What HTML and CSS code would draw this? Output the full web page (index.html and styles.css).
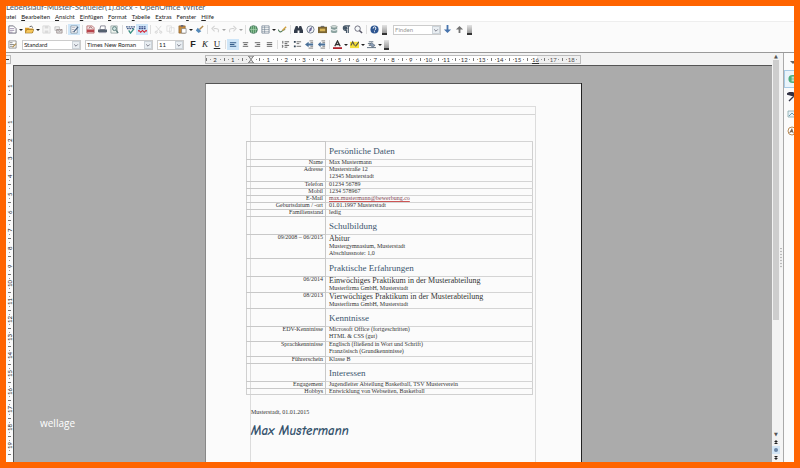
FILE: index.html
```
<!DOCTYPE html>
<html lang="de">
<head>
  <meta charset="utf-8">
  <title>Lebenslauf - OpenOffice Writer</title>
  <link rel="stylesheet" href="styles.css">
</head>
<body>
  <div class="window">
    <div class="titlebar"><span>Lebenslauf-Muster-Schueler(1).docx - OpenOffice Writer</span></div>

    <nav class="menubar">
      <a href="#" class="menu-first">Datei</a>
      <a href="#"><u>B</u>earbeiten</a>
      <a href="#"><u>A</u>nsicht</a>
      <a href="#"><u>E</u>infügen</a>
      <a href="#"><u>F</u>ormat</a>
      <a href="#"><u>T</u>abelle</a>
      <a href="#">E<u>x</u>tras</a>
      <a href="#">Fen<u>s</u>ter</a>
      <a href="#"><u>H</u>ilfe</a>
    </nav>

    <!-- Standard toolbar -->
    <div class="toolbar">
      <button class="tool" aria-label="Neu"><svg viewBox="0 0 10 10"><path d="M1 1h5l3 3v5H1z" fill="#fff" stroke="#667"/><path d="M2 4h5M2 6h5M2 8h3" stroke="#879" stroke-width=".8"/></svg></button>
      <span class="caret"></span>
      <button class="tool" aria-label="Öffnen"><svg viewBox="0 0 10 10"><path d="M0 3h4l1 1h4v5H0z" fill="#d99a28"/><path d="M2 5h8L8 9H0z" fill="#f6c65c" stroke="#8b6a24" stroke-width=".6"/><path d="M5 2q2-2 4 1" fill="none" stroke="#555"/></svg></button>
      <span class="caret"></span>
      <button class="tool dim" aria-label="Speichern"><svg viewBox="0 0 10 10"><path d="M1 1h7l1 1v7H1z" fill="#eee" stroke="#888" stroke-width=".7"/><path d="M3 1h4v3H3zM3 6h4v3H3z" fill="#aaa"/></svg></button>
      <button class="tool" aria-label="E-Mail"><svg viewBox="0 0 10 10"><path d="M1 2h5v4H1z" fill="#eee" stroke="#aaa" stroke-width=".7"/><path d="M3 5h6v4H3z" fill="#ddd" stroke="#877" stroke-width=".7"/><path d="M3 5l3 2 3-2" fill="none" stroke="#877" stroke-width=".7"/></svg></button>
      <span class="sep"></span>
      <button class="tool active" aria-label="Datei bearbeiten"><svg viewBox="0 0 10 10"><path d="M1 1h7v8H1z" fill="#fff" stroke="#789" stroke-width=".8"/><path d="M2 3h4M2 5h3M2 7h2" stroke="#889" stroke-width=".7"/><path d="M4 8l5-6" stroke="#466080" stroke-width="1.4"/></svg></button>
      <span class="sep"></span>
      <button class="tool" aria-label="PDF"><svg viewBox="0 0 10 10"><path d="M1 1h6l2 2v6H1z" fill="#f4e3e3" stroke="#a55" stroke-width=".8"/><path d="M1 5h8v3H1z" fill="#b8434b"/><path d="M3 4l2-2 2 2" fill="none" stroke="#855"/></svg></button>
      <button class="tool" aria-label="Drucken"><svg viewBox="0 0 10 10"><path d="M3 1h5v4H2z" fill="#fff" stroke="#667" stroke-width=".8"/><path d="M0 5h10v3H0z" fill="#566170"/><path d="M1 8h8v1H1z" fill="#99a"/></svg></button>
      <button class="tool" aria-label="Seitenansicht"><svg viewBox="0 0 10 10"><path d="M1 1h7v8H1z" fill="#eef4ee" stroke="#899" stroke-width=".8"/><circle cx="5" cy="4" r="2.2" fill="#cfe3e0" stroke="#577" /><path d="M7 6l2 3" stroke="#577" stroke-width="1.4"/></svg></button>
      <span class="sep"></span>
      <button class="tool" aria-label="Rechtschreibung"><svg viewBox="0 0 10 10"><path d="M0 2h10M1 4h8" stroke="#47608c" stroke-width="1.4" stroke-dasharray="2 .7"/><path d="M3 6l2 3 4-5" fill="none" stroke="#3b8f83" stroke-width="1.5"/></svg></button>
      <button class="tool active" aria-label="Automatische Prüfung"><svg viewBox="0 0 10 10"><path d="M1 2h8M1 4h8" stroke="#3b4c88" stroke-width="1.4" stroke-dasharray="2 .7"/><path d="M0 7l1-1 2 2 2-2 2 2 2-2 1 1" fill="none" stroke="#d52332" stroke-width="1.2"/></svg></button>
      <span class="sep"></span>
      <button class="tool dim" aria-label="Ausschneiden"><svg viewBox="0 0 10 10"><path d="M2 1l5 6M8 1L3 7" stroke="#999" stroke-width=".8"/><circle cx="2.5" cy="8" r="1.2" fill="none" stroke="#999"/><circle cx="7.5" cy="8" r="1.2" fill="none" stroke="#999"/></svg></button>
      <button class="tool dim" aria-label="Kopieren"><svg viewBox="0 0 10 10"><path d="M1 1h5v6H1zM4 3h5v6H4z" fill="#fff" stroke="#aaa" stroke-width=".8"/></svg></button>
      <button class="tool" aria-label="Einfügen"><svg viewBox="0 0 10 10"><path d="M1 1h7v8H1z" fill="#c58a3c" stroke="#865f2c" stroke-width=".7"/><path d="M3 0h3v2H3z" fill="#667"/><path d="M4 4h5v5H4z" fill="#fff" stroke="#777" stroke-width=".7"/></svg></button>
      <span class="caret"></span>
      <button class="tool" aria-label="Format übertragen"><svg viewBox="0 0 10 10"><path d="M9 1L5 5" stroke="#b38a4d" stroke-width="1.6"/><path d="M3 3l4 4-3 2-3-3z" fill="#5589b9"/></svg></button>
      <span class="sep"></span>
      <button class="tool dim" aria-label="Rückgängig"><svg viewBox="0 0 10 10"><path d="M8 8q2-5-5-4M4 1L1 4l3 3" fill="none" stroke="#999" stroke-width="1.2"/></svg></button>
      <span class="caret dim"></span>
      <button class="tool dim" aria-label="Wiederherstellen"><svg viewBox="0 0 10 10"><path d="M2 8q-2-5 5-4M6 1l3 3-3 3" fill="none" stroke="#999" stroke-width="1.2"/></svg></button>
      <span class="caret dim"></span>
      <span class="sep"></span>
      <button class="tool" aria-label="Hyperlink"><svg viewBox="0 0 10 10"><circle cx="5" cy="5" r="4.3" fill="#559764" stroke="#3d6b58" stroke-width=".8"/><path d="M1 5h8M5 1v8M3 1q-1 4 0 8M7 1q1 4 0 8" stroke="#b8dbc0" stroke-width=".6" fill="none"/></svg></button>
      <button class="tool" aria-label="Tabelle"><svg viewBox="0 0 10 10"><path d="M1 1h8v8H1z" fill="#fff" stroke="#678" stroke-width=".8"/><path d="M1 3h8M1 5h8M1 7h8M4 1v8" stroke="#678" stroke-width=".6"/></svg></button>
      <span class="caret"></span>
      <button class="tool" aria-label="Zeichnen"><svg viewBox="0 0 10 10"><path d="M0 5q2 4 4 2t4-2" fill="none" stroke="#4f7a5a" stroke-width="1.2"/><path d="M5 6l4-4" stroke="#d0a040" stroke-width="1.6"/></svg></button>
      <span class="sep"></span>
      <button class="tool" aria-label="Suchen"><svg viewBox="0 0 10 10"><path d="M2 1h2l1 3 1-3h2l2 5v3H6V6H4v3H0V6z" fill="#333c4a"/></svg></button>
      <button class="tool" aria-label="Navigator"><svg viewBox="0 0 10 10"><circle cx="5" cy="5" r="4" fill="#f3f6f9" stroke="#6c7886"/><path d="M7 2L6 6 3 8l1-4z" fill="#6d6a9a"/></svg></button>
      <button class="tool" aria-label="Gallery"><svg viewBox="0 0 10 10"><path d="M0 2h10v7H0z" fill="#7a6432"/><path d="M2 4h6v3H2z" fill="#d7b457"/><path d="M3 1h4v1H3z" fill="#555"/></svg></button>
      <button class="tool" aria-label="Datenquellen"><svg viewBox="0 0 10 10"><path d="M1 2v6q4 2 7 0V2z" fill="#8ea5a2"/><ellipse cx="4.5" cy="2" rx="3.5" ry="1.3" fill="#dde7e3" stroke="#677"  stroke-width=".6"/><path d="M1 5q4 2 7 0" fill="none" stroke="#fff"/></svg></button>
      <button class="tool" aria-label="Steuerzeichen"><svg viewBox="0 0 10 10"><path d="M9 1H4a2.5 2.5 0 000 5h1v3M7 1v8" fill="none" stroke="#456" stroke-width="1.3"/><circle cx="4" cy="3.5" r="2" fill="#456"/></svg></button>
      <button class="tool" aria-label="Maßstab"><svg viewBox="0 0 10 10"><circle cx="4" cy="4" r="3" fill="#f5f8fa" stroke="#667"/><path d="M6 6l3 3" stroke="#556" stroke-width="1.6"/></svg></button>
      <span class="sep"></span>
      <button class="tool" aria-label="Hilfe"><svg viewBox="0 0 10 10"><circle cx="5" cy="5" r="4.5" fill="#2d5590"/><path d="M3.5 4q0-2 1.5-2t1.5 1.5T5 6M5 7v1" fill="none" stroke="#fff" stroke-width="1.1"/></svg></button>
      <span class="handle"></span>
      <div class="combo find">
        <input type="text" placeholder="Finden" aria-label="Finden">
        <span class="drop"><svg viewBox="0 0 10 10"><path d="M2 4l3 3 3-3" fill="none" stroke="#556" stroke-width="1.2"/></svg></span>
      </div>
      <button class="tool" aria-label="Weitersuchen"><svg viewBox="0 0 10 10"><path d="M4 0h2v5h3L5 9 1 5h3z" fill="#4673ac"/></svg></button>
      <button class="tool" aria-label="Rückwärts suchen"><svg viewBox="0 0 10 10"><path d="M4 9h2V5h3L5 1 1 5h3z" fill="#737373"/></svg></button>
      <span class="handle"></span>
    </div>

    <!-- Formatting toolbar -->
    <div class="toolbar">
      <button class="tool styles" aria-label="Formatvorlagen"><svg viewBox="0 0 10 10"><path d="M1 1h8v8H1z" fill="#fff" stroke="#777" stroke-width=".8"/><path d="M2 3h3M2 5h5M2 7h3" stroke="#666" stroke-width=".8"/><path d="M5 8l4-4" stroke="#b09050" stroke-width="1.4"/></svg></button>
      <div class="combo style">
        <select aria-label="Vorlage"><option>Standard</option></select>
        <span class="drop"><svg viewBox="0 0 10 10"><path d="M2 4l3 3 3-3" fill="none" stroke="#556" stroke-width="1.2"/></svg></span>
      </div>
      <div class="combo font">
        <select aria-label="Schriftart"><option>Times New Roman</option></select>
        <span class="drop"><svg viewBox="0 0 10 10"><path d="M2 4l3 3 3-3" fill="none" stroke="#556" stroke-width="1.2"/></svg></span>
      </div>
      <div class="combo size">
        <select aria-label="Schriftgröße"><option>11</option></select>
        <span class="drop"><svg viewBox="0 0 10 10"><path d="M2 4l3 3 3-3" fill="none" stroke="#556" stroke-width="1.2"/></svg></span>
      </div>
      <button class="tool letter"><b>F</b></button>
      <button class="tool letter"><i>K</i></button>
      <button class="tool letter"><u>U</u></button>
      <span class="sep"></span>
      <button class="tool active" aria-label="Linksbündig"><svg viewBox="0 0 10 10"><path d="M1 3h7M1 5h5M1 7h7" stroke="#345c88" stroke-width="1.2"/></svg></button>
      <button class="tool" aria-label="Zentriert"><svg viewBox="0 0 10 10"><path d="M2 3h6M3 5h4M2 7h6" stroke="#666" stroke-width="1.1"/></svg></button>
      <button class="tool" aria-label="Rechtsbündig"><svg viewBox="0 0 10 10"><path d="M2 3h6M4 5h4M2 7h6" stroke="#666" stroke-width="1.1"/></svg></button>
      <button class="tool" aria-label="Blocksatz"><svg viewBox="0 0 10 10"><path d="M2 3h6M2 5h6M2 7h6" stroke="#666" stroke-width="1.1"/></svg></button>
      <span class="sep"></span>
      <button class="tool" aria-label="Nummerierung"><svg viewBox="0 0 10 10"><path d="M2 1v3M1 6h1v2H1M4 2h5M4 4h3M4 6h5M4 8h3" fill="none" stroke="#555"/></svg></button>
      <button class="tool" aria-label="Aufzählung"><svg viewBox="0 0 10 10"><path d="M1 2h2M1 7h2" stroke="#345" stroke-width="2"/><path d="M4 2h5M4 4h3M4 7h5" stroke="#666"/></svg></button>
      <button class="tool" aria-label="Einzug vermindern"><svg viewBox="0 0 10 10"><path d="M5 1h4M6 3h3M6 7h3M4 9h5" stroke="#777"/><path d="M0 5l4-3v2h5v2H4v2z" fill="#497099"/></svg></button>
      <button class="tool" aria-label="Einzug erhöhen"><svg viewBox="0 0 10 10"><path d="M5 1h4M6 3h3M6 7h3M4 9h5" stroke="#777"/><path d="M1 5l3-3v2h5v2H4v2z" fill="#497099"/></svg></button>
      <span class="sep"></span>
      <button class="tool" aria-label="Schriftfarbe"><svg viewBox="0 0 10 10"><path d="M2 7l3-6 3 6M3 5h4" fill="none" stroke="#333" stroke-width="1.4"/><path d="M0 8h10v2H0z" fill="#b0222c"/></svg></button>
      <span class="caret"></span>
      <button class="tool" aria-label="Hervorheben"><svg viewBox="0 0 10 10"><path d="M0 2h10v7H0z" fill="#f5df38"/><path d="M1 6l2-4 2 4M6 7l4-5" fill="none" stroke="#554" stroke-width="1.2"/></svg></button>
      <span class="caret"></span>
      <button class="tool" aria-label="Absatzhintergrund"><svg viewBox="0 0 10 10"><path d="M2 2h5M1 4h4M2 6h2" stroke="#567"/><path d="M5 3l4 3-3 2-3-3z" fill="#8a9cb4" stroke="#456" stroke-width=".6"/><path d="M0 8h10v1H0z" fill="#567"/></svg></button>
      <span class="caret"></span>
      <span class="handle"></span>
    </div>

    <div class="main">
      <div class="editor">
        <div class="ruler-row">
          <span class="tab-type"></span>
          <div class="ruler">
            <span>2</span><span>1</span><span class="indent"><svg viewBox="0 0 8 8"><path d="M1 0h6L4 4zM4 4l3 4H1z" fill="#ddd" stroke="#555" stroke-width=".8"/></svg></span><span>1</span><span>2</span><span>3</span><span>4</span><span>5</span><span>6</span><span>7</span><span>8</span><span>9</span><span>10</span><span>11</span><span>12</span><span>13</span><span>14</span><span>15</span><span class="edge">16</span><span class="margin">17</span><span class="margin">18</span>
          </div>
        </div>

        <div class="workspace">
          <div class="vruler">
            <span>1</span><span></span><span>1</span><span>2</span><span>3</span><span>4</span><span>5</span><span>6</span><span>7</span><span>8</span><span>9</span><span>10</span><span>11</span><span>12</span><span>13</span><span>14</span><span>15</span><span>16</span><span>17</span><span>18</span><span>19</span>
          </div>
          <div class="canvas">
            <div class="page">
              <div class="text-area">
                <div class="page-header"></div>
                <table class="cv">
                  <tr class="section"><td></td><th>Persönliche Daten</th></tr>
                  <tr><td>Name</td><td>Max Mustermann</td></tr>
                  <tr class="multi"><td>Adresse</td><td>Musterstraße 12<br>12345 Musterstadt</td></tr>
                  <tr><td>Telefon</td><td>01234 56789</td></tr>
                  <tr><td>Mobil</td><td>1234 578967</td></tr>
                  <tr><td>E-Mail</td><td><a href="mailto:max.mustermann@bewerbung.co">max.mustermann@bewerbung.co</a></td></tr>
                  <tr><td>Geburtsdatum / -ort</td><td>01.01.1997 Musterstadt</td></tr>
                  <tr><td>Familienstand</td><td>ledig</td></tr>
                  <tr class="section"><td></td><th>Schulbildung</th></tr>
                  <tr class="multi"><td>09/2008 – 06/2015</td><td><span class="lead">Abitur</span>Mustergymnasium, Musterstadt<br>Abschlussnote: 1,0</td></tr>
                  <tr class="section"><td></td><th>Praktische Erfahrungen</th></tr>
                  <tr><td>06/2014</td><td><span class="lead">Einwöchiges Praktikum in der Musterabteilung</span>Musterfirma GmbH, Musterstadt</td></tr>
                  <tr><td>08/2013</td><td><span class="lead">Vierwöchiges Praktikum in der Musterabteilung</span>Musterfirma GmbH, Musterstadt</td></tr>
                  <tr class="section"><td></td><th>Kenntnisse</th></tr>
                  <tr class="multi"><td>EDV-Kenntnisse</td><td>Microsoft Office (fortgeschritten)<br>HTML &amp; CSS (gut)</td></tr>
                  <tr class="multi"><td>Sprachkenntnisse</td><td>Englisch (fließend in Wort und Schrift)<br>Französisch (Grundkenntnisse)</td></tr>
                  <tr><td>Führerschein</td><td>Klasse B</td></tr>
                  <tr class="section"><td></td><th>Interessen</th></tr>
                  <tr><td>Engagement</td><td>Jugendleiter Abteilung Basketball, TSV Musterverein</td></tr>
                  <tr><td>Hobbys</td><td>Entwicklung von Webseiten, Basketball</td></tr>
                </table>
                <p class="place">Musterstadt, 01.01.2015</p>
                <p class="signature">Max Mustermann</p>
              </div>
            </div>
            <span class="watermark">wellage</span>
          </div>
        </div>
      </div>

      <div class="scrollbar">
        <span class="arrow">▲</span>
        <div class="track"><div class="thumb"></div></div>
        <span class="arrow">▼</span>
        <button class="jump" aria-label="Seite zurück"><svg viewBox="0 0 6 6"><path d="M1 3l2-2 2 2zM1 5l2-2 2 2z" fill="#222"/></svg></button>
        <button class="jump nav" aria-label="Navigation"><svg viewBox="0 0 6 6"><circle cx="3" cy="3" r="2" fill="#6b87a8"/></svg></button>
        <button class="jump" aria-label="Seite vor"><svg viewBox="0 0 6 6"><path d="M1 1l2 2 2-2zM1 3l2 2 2-2z" fill="#222"/></svg></button>
      </div>
      <div class="splitter"><span></span></div>
      <div class="sidebar">
        <button class="side" aria-label="Einstellungen"><svg viewBox="0 0 10 10"><path d="M3 4h6L6 7z" fill="#666"/></svg></button>
        <button class="side current" aria-label="Eigenschaften"><svg viewBox="0 0 10 10"><circle cx="5" cy="5" r="4.5" fill="#4eae7f"/><path d="M4 3h5M4 5h5M4 7h5" stroke="#fff"/></svg></button>
        <button class="side" aria-label="Vorlagen"><svg viewBox="0 0 10 10"><path d="M0 2q4-3 8 0l-1 2-3-1zM8 3L2 9" fill="#334" stroke="#334" stroke-width="1.4"/></svg></button>
        <button class="side" aria-label="Gallery"><svg viewBox="0 0 10 10"><path d="M1 2h8v6H1z" fill="#e7f1f8" stroke="#8aa" stroke-width=".8"/><path d="M2 7l3-3 4 4" fill="none" stroke="#69a"/></svg></button>
        <button class="side" aria-label="Navigator"><svg viewBox="0 0 10 10"><circle cx="5" cy="5" r="4" fill="#fff" stroke="#b98a55"/><path d="M5 2l2 6-2-2-3 1z" fill="#765"/></svg></button>
      </div>
    </div>
  </div>
</body>
</html>
```

FILE: styles.css
```
* {
  box-sizing: border-box;
}
body {
  margin: 0;
  height: 100vh;
  padding: 6px;
  background: #ff6400;
  font-family: Lato, "Open Sans", sans-serif;
  font-size: 6px;
  color: #222;
  overflow: hidden;
}
button {
  border: none;
  background: none;
  padding: 0;
  color: inherit;
}
svg {
  display: block;
}
.window {
  height: 100%;
  display: flex;
  flex-direction: column;
  background: #fbfbfb;
  overflow: hidden;
}

/* title and menu */
.titlebar {
  height: 5px;
  flex: none;
  display: flex;
  align-items: flex-end;
  overflow: hidden;
  background: #fff;
  font-size: 8px;
  line-height: 8px;
  color: #555;
}
.menubar {
  height: 11px;
  flex: none;
  display: flex;
  align-items: center;
  gap: 5px;
  overflow: hidden;
  background: #fff;
  border-bottom: 1px solid #eee;
}
.menubar a {
  color: #222;
  text-decoration: none;
}
.menu-first {
  margin-left: -4px;
}

/* toolbars */
.toolbar {
  height: 15px;
  flex: none;
  display: flex;
  align-items: center;
}
.tool {
  width: 12px;
  height: 11px;
  display: flex;
  align-items: center;
  justify-content: center;
}
.tool svg {
  width: 9px;
  height: 9px;
}
.tool.active {
  background: #cfe6f8;
}
.dim {
  opacity: 0.4;
}
.letter {
  font-family: "Liberation Serif", serif;
  font-size: 9px;
  line-height: 11px;
}
.letter b {
  font-family: "Liberation Sans", sans-serif;
}
.caret {
  width: 5px;
  display: flex;
  justify-content: center;
}
.caret::before {
  content: "";
  border: 2px solid transparent;
  border-top-color: #222;
  border-bottom: none;
}
.sep {
  width: 4px;
  height: 9px;
  background: linear-gradient(#ddd, #ddd) center / 1px 100% no-repeat;
}
.handle {
  width: 5px;
  height: 10px;
  margin: 0 2px;
  background: linear-gradient(#e4e4e4, #999);
  border-bottom: 2px solid #333;
}
.combo {
  height: 10px;
  display: flex;
  border: 1px solid #ccc;
  background: #fff;
}
.combo select,
.combo input {
  flex: 1;
  min-width: 0;
  appearance: none;
  border: none;
  padding: 0 1px;
  background: none;
  font-family: inherit;
  font-size: 6px;
  line-height: 8px;
  color: #222;
}
.combo input::placeholder {
  color: #999;
}
.drop {
  width: 8px;
  background: #e9eef2;
  border: 1px solid #ccd3d9;
}
.find {
  width: 48px;
  margin-left: 4px;
}
.styles {
  margin-right: 4px;
}
.style {
  width: 59px;
  margin-right: 4px;
}
.font {
  width: 68px;
  margin-right: 4px;
}
.size {
  width: 27px;
  margin-right: 3px;
}

/* editor */
.main {
  flex: 1;
  min-height: 0;
  display: flex;
  border-top: 1px solid #999;
}
.editor {
  flex: 1;
  min-width: 0;
  display: flex;
  flex-direction: column;
}
.ruler-row {
  height: 12px;
  flex: none;
  display: flex;
  align-items: center;
  background: #f3f3f3;
}
.tab-type {
  width: 5px;
  height: 9px;
  margin-right: 3px;
  border: 1px solid #bbb;
  border-left: none;
  background: linear-gradient(#333, #333) left center / 3px 1px no-repeat;
}
.ruler {
  width: 376px;
  height: 9px;
  margin: 0 auto;
  display: flex;
  border: 1px solid #bbb;
  background: linear-gradient(#fff, #fff) 44px 0 / 287px 100% no-repeat #f0f0f0;
  line-height: 7px;
  color: #333;
}
.ruler span {
  flex: 1;
  text-align: center;
  background: linear-gradient(#777, #777) left center / 1px 3px no-repeat,
    linear-gradient(#999, #999) 4px center / 1px 1px no-repeat,
    linear-gradient(#999, #999) 14px center / 1px 1px no-repeat;
}
.ruler .indent svg {
  width: 8px;
  height: 7px;
  margin: 0 auto;
}
.ruler .edge {
  text-decoration: underline;
}
.ruler .margin {
  color: #555;
}
.workspace {
  flex: 1;
  min-height: 0;
  display: flex;
}
.vruler {
  width: 8px;
  flex: none;
  padding-top: 12px;
  overflow: hidden;
  background: #fafafa;
  border-right: 1px solid #555;
}
.vruler span {
  height: 18px;
  display: block;
  writing-mode: vertical-rl;
  transform: rotate(180deg);
  text-align: center;
  line-height: 7px;
  background: linear-gradient(#777, #777) center top / 3px 1px no-repeat,
    linear-gradient(#999, #999) center 4px / 1px 1px no-repeat,
    linear-gradient(#999, #999) center 14px / 1px 1px no-repeat;
}
.canvas {
  flex: 1;
  position: relative;
  display: flex;
  justify-content: center;
  padding-top: 17px;
  overflow: hidden;
  background: #ababab;
  border-top: 1px solid #555;
}
.watermark {
  position: absolute;
  left: 26px;
  bottom: 32px;
  font-family: "Open Sans", sans-serif;
  font-size: 10px;
  line-height: 14px;
  color: #fff;
}

/* document */
.page {
  width: 376px;
  padding: 22px 45px 0 44px;
  background: #fbfbfb;
  border-top: 1px solid #555;
  border-left: 1px solid #888;
  box-shadow: 1px 0 #222;
  font-family: "Liberation Serif", serif;
  line-height: 7px;
  color: #333;
}
.text-area {
  height: 100%;
  border: 1px solid #dcdcdc;
  border-bottom: none;
}
.page-header {
  height: 8px;
  border-bottom: 1px solid #d4d4d4;
}
.cv {
  width: 287px;
  margin: 26px 0 0 -5px;
  border-collapse: separate;
  border-spacing: 0;
  table-layout: fixed;
  box-shadow: inset 0 0 0 1px #d0d0d0;
}
.cv td,
.cv th {
  padding: 0 3px;
  vertical-align: top;
  text-align: left;
  font-weight: normal;
  box-shadow: inset 0 1px #d4d4d4;
}
.cv td:first-child {
  width: 80px;
  padding: 0 3px 0 0;
  text-align: right;
  box-shadow: inset -1px 1px #c8c8c8;
}
.cv .multi td {
  padding-bottom: 1px;
}
.cv th {
  height: 18px;
  padding-top: 4px;
  font-size: 9px;
  line-height: 12px;
  color: #3c566e;
}
.cv a {
  color: #7d4650;
  text-decoration: underline #c55;
}
.lead {
  display: block;
  font-size: 8px;
  line-height: 9px;
}
.place {
  margin: 14px 0 0;
}
.signature {
  margin: 6px 0 0;
  font-family: "Comic Sans MS", "Comic Neue", "Open Sans", sans-serif;
  font-size: 13px;
  font-style: italic;
  font-weight: 600;
  line-height: 18px;
  color: #34526c;
}

/* right side */
.scrollbar {
  width: 8px;
  flex: none;
  display: flex;
  flex-direction: column;
  align-items: center;
  background: #f2f2f2;
}
.arrow {
  height: 7px;
  font-family: "DejaVu Sans", sans-serif;
  font-size: 5px;
  line-height: 7px;
  color: #555;
}
.track {
  flex: 1;
  width: 6px;
}
.thumb {
  height: 70%;
  background: #cdcdcd;
}
.jump {
  width: 8px;
  height: 8px;
}
.jump svg {
  width: 6px;
  height: 6px;
  margin: 0 auto;
}
.jump.nav {
  background: #d4e6f5;
}
.splitter {
  width: 4px;
  flex: none;
  display: flex;
  align-items: center;
  background: #f5f5f5;
  border-right: 1px solid #aaa;
}
.splitter span {
  width: 2px;
  height: 20px;
  background: repeating-linear-gradient(#bbb 0 1px, #eee 1px 3px);
}
.sidebar {
  width: 10px;
  flex: none;
  overflow: hidden;
}
.side {
  width: 14px;
  height: 17px;
  display: flex;
  align-items: center;
  padding-left: 3px;
}
.side svg {
  width: 10px;
  height: 10px;
}
.side.current {
  height: 18px;
  border: 1px solid #a9cbe6;
  background: #eaf4fb;
}
```
